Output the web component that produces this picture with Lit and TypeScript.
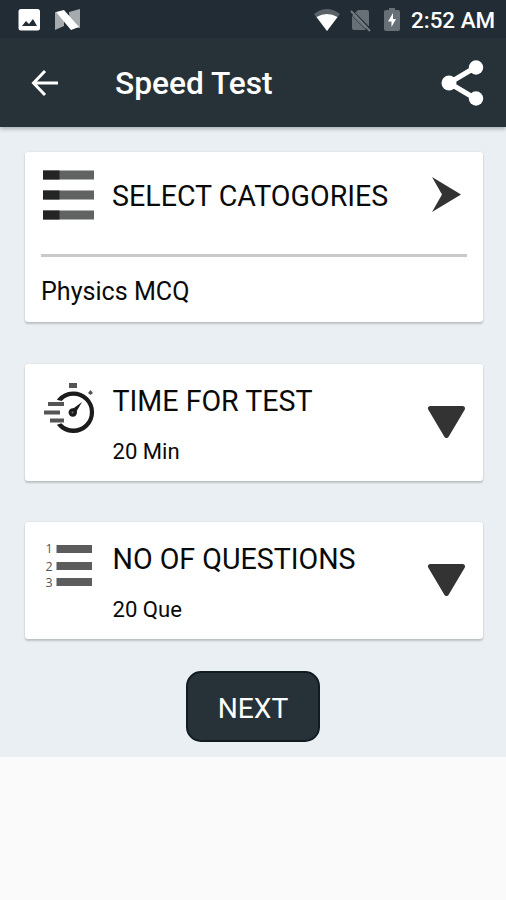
import { LitElement, html, css } from "lit";
import { customElement } from "lit/decorators.js";

@customElement("app-root")
export class AppRoot extends LitElement {
  static styles = css`
    :host { display: block; height: 900px; overflow: hidden; background: #fafafa; font-family: Roboto, "Noto Sans", sans-serif; color: #0a0a0a; }
    * { box-sizing: border-box; }
    svg { display: block; flex: none; }
    .status { height: 38px; background: #222c34; display: flex; align-items: center; padding: 0 11px 0 17px; color: #fff; }
    .nougat { margin-left: 14px; }
    .system { margin-left: auto; display: flex; align-items: center; }
    .nosim { margin-left: 8px; }
    .battery { margin-left: 13px; }
    .clock { margin-left: 11px; width: 84px; font-size: 22.4px; line-height: 38px; font-weight: 500; white-space: nowrap; margin-top: 1px; }
    .bar { height: 89px; background: #263238; color: #fff; display: flex; align-items: center; padding: 0 22px 0 31px; position: relative; box-shadow: 0 2px 4px #0004; }
    .title { margin: 2px 0 0 56px; flex: 1; font-size: 31.7px; font-weight: 500; line-height: 40px; white-space: nowrap; }
    .body { height: 630px; background: #e9eff2; padding: 25px 23px 0 25px; display: flex; flex-direction: column; align-items: center; }
    .card { width: 458px; background: #fff; border-radius: 3px; box-shadow: 0 2px 2px #0000002e, 0 0 2px #0000001c; }
    .card.first { height: 170px; padding: 0 16px; }
    .head { height: 102px; display: flex; align-items: flex-start; padding-top: 18px; }
    .name { font-size: 28.6px; line-height: 34px; white-space: nowrap; }
    .head .name { margin: 9px 0 0 18px; flex: 1; }
    .go { margin: 7px 5px 0 0; }
    .rule { height: 3px; background: #c9c9c9; }
    .chosen { font-size: 25.1px; line-height: 30px; margin-top: 20px; }
    .row { height: 117px; margin-top: 42px; display: flex; padding: 0 16.500px 0 18px; }
    .row.last { margin-top: 41px; }
    .row .icon { margin-top: 18px; }
    .text { flex: 1; margin: 20px 0 0 16.500px; }
    .value { font-size: 22.1px; line-height: 28px; margin-top: 19px; }
    .down { margin-top: 40px; }
    .next { margin: 32px 2px 0 0; width: 134px; height: 71px; border: 2px solid #111b22; border-radius: 15px; background: #263238; color: #fff; font: 400 28.2px/34px Roboto, sans-serif; padding: 4px 0 0; text-align: center; }
    .digit { font-family: "Open Sans", sans-serif; font-size: 12.5px; fill: #555; }
  `;

  private downArrow() {
    return html`<svg class="down" width="40" height="36" viewBox="0 0 40 36"><path d="M3.500 4.500H35.500L19.500 31.500Z" fill="#333" stroke="#333" stroke-width="5" stroke-linejoin="round"/></svg>`;
  }

  render() {
    return html`
      <div class="status">
        <svg width="24" height="24" viewBox="0 0 24 24"><rect x="1.500" y="2" width="21.500" height="21.500" rx="2.500" fill="#fff"/><path d="M5 19l4-5 3 3 4-5 4 7Z" fill="#222c34"/></svg>
        <svg class="nougat" width="25" height="24" viewBox="0 0 25 24"><path d="M0 5L9 7V19L0 23ZM14 5L25 2V21L15 19Z" fill="#a5aaae"/><path d="M1 5L9 3L24 20L16 23Z" fill="#fff"/></svg>
        <div class="system">
          <svg width="28" height="24" viewBox="0 0 28 24"><path d="M0 7Q13-3 26 7L13 24Z" fill="#596269"/><path d="M2.500 10Q13 4 23.500 10L13 24Z" fill="#fff"/></svg>
          <svg class="nosim" width="21" height="25" viewBox="0 0 21 25"><path d="M8 3H17Q19 3 19 5V20L5 6ZM2 9L16 23H4Q2 23 2 21Z" fill="#687077"/><path d="M4 7L17 20" stroke="#687077" stroke-width="5"/><path d="M3 4.500L20 21.500" stroke="#222c34" stroke-width="1.500"/><path d="M1 4L20 24" stroke="#737a80" stroke-width="2"/></svg>
          <svg class="battery" width="16" height="24" viewBox="0 0 16 24"><path d="M5 1H11V3H14Q16 3 16 5V22Q16 24 14 24H2Q0 24 0 22V5Q0 3 2 3H5Z" fill="#687077"/><path d="M9 6L4 14.500H7.500V20L12 12H9Z" fill="#fff"/></svg>
          <div class="clock">2:52 AM</div>
        </div>
      </div>
      <header class="bar">
        <svg width="28" height="28" viewBox="0 0 28 28"><path d="M27 14H3M14 2L2.500 14L14 26" fill="none" stroke="#fff" stroke-width="3"/></svg>
        <h1 class="title">Speed Test</h1>
        <svg width="43" height="46" viewBox="0 0 43 46"><path d="M35 7L8 23L35 39" fill="none" stroke="#fff" stroke-width="5"/><g fill="#fff"><circle cx="35" cy="7.500" r="7.200"/><circle cx="8" cy="23" r="7.500"/><circle cx="35" cy="38.500" r="7.200"/></g></svg>
      </header>
      <main class="body">
        <section class="card first">
          <div class="head">
            <svg width="53" height="52" viewBox="0 0 53 52"><path d="M2 .5H53V9.500H2ZM2 20.500H53V29.500H2ZM2 40.500H53V49.500H2Z" fill="#616362"/><path d="M2 .5H18.500V9.500H2ZM2 20.500H18.500V29.500H2ZM2 40.500H18.500V49.500H2Z" fill="#242424"/></svg>
            <div class="name">SELECT CATOGORIES</div>
            <svg class="go" width="31" height="36" viewBox="0 0 31 36"><path d="M1 0L30 17.500L1 35L11 17.500Z" fill="#333"/></svg>
          </div>
          <div class="rule"></div>
          <div class="chosen">Physics MCQ</div>
        </section>
        <section class="card row">
          <svg class="icon" width="53" height="54" viewBox="0 0 53 54">
            <path d="M15.500 17.200A19.800 19.800 0 1 1 15.500 43.300L18.200 42.400A17.300 17.300 0 1 0 18.200 18Z" fill="#1c1c1c" stroke="#1c1c1c" stroke-width="1.800"/>
            <path d="M26 1H34V6H26ZM5 20H21V24H5ZM1 28.500H17V32.500H1ZM7 36.500H21V40.500H7Z" fill="#555"/>
            <path d="M45 11L47.500 8L50 11L47.500 13Z" fill="#555"/>
            <circle cx="29.800" cy="30.500" r="4.200" fill="#1c1c1c"/><path d="M27.500 28.500L39 20L32 32Z" fill="#1c1c1c"/><circle cx="29.500" cy="30.500" r="1" fill="#777"/>
          </svg>
          <div class="text"><div class="name">TIME FOR TEST</div><div class="value">20 Min</div></div>
          ${this.downArrow()}
        </section>
        <section class="card row last">
          <svg class="icon" width="53" height="54" viewBox="0 0 53 54">
            <text class="digit" x="2.500" y="13">1</text><text class="digit" x="2.500" y="30.500">2</text><text class="digit" x="2.500" y="47">3</text>
            <path d="M13.500 5H49V13H13.500ZM13.500 22H49V30H13.500ZM13.500 38H49V46H13.500Z" fill="#5c5c5c"/>
          </svg>
          <div class="text"><div class="name">NO OF QUESTIONS</div><div class="value">20 Que</div></div>
          ${this.downArrow()}
        </section>
        <button class="next">NEXT</button>
      </main>`;
  }
}
